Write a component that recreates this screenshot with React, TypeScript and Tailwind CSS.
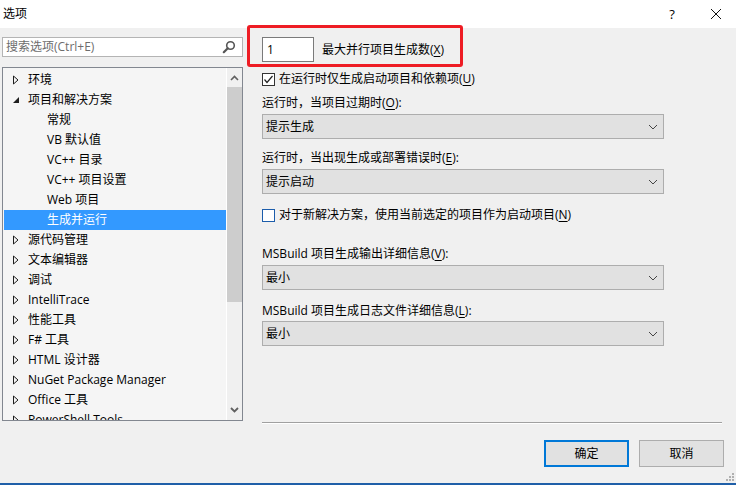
import React from "react"

const font = { fontFamily: '"Open Sans", "Noto Sans CJK SC", sans-serif' }

type TreeItem = { label: string; level: 0 | 1; state?: "open" | "closed"; selected?: boolean }

const treeItems: TreeItem[] = [
  { label: "环境", level: 0, state: "closed" },
  { label: "项目和解决方案", level: 0, state: "open" },
  { label: "常规", level: 1 },
  { label: "VB 默认值", level: 1 },
  { label: "VC++ 目录", level: 1 },
  { label: "VC++ 项目设置", level: 1 },
  { label: "Web 项目", level: 1 },
  { label: "生成并运行", level: 1, selected: true },
  { label: "源代码管理", level: 0, state: "closed" },
  { label: "文本编辑器", level: 0, state: "closed" },
  { label: "调试", level: 0, state: "closed" },
  { label: "IntelliTrace", level: 0, state: "closed" },
  { label: "性能工具", level: 0, state: "closed" },
  { label: "F# 工具", level: 0, state: "closed" },
  { label: "HTML 设计器", level: 0, state: "closed" },
  { label: "NuGet Package Manager", level: 0, state: "closed" },
  { label: "Office 工具", level: 0, state: "closed" },
  { label: "PowerShell Tools", level: 0, state: "closed" },
]

function Arrow({ state }: { state: "open" | "closed" }) {
  if (state === "open") {
    return (
      <svg width="8" height="8" viewBox="0 0 8 8" className="block">
        <polygon points="7,1 7,7 1,7" fill="#1e1e1e" />
      </svg>
    )
  }
  return (
    <svg width="8" height="10" viewBox="0 0 8 10" className="block">
      <polygon points="1.5,1 6,5 1.5,9" fill="none" stroke="#1e1e1e" strokeWidth="1" />
    </svg>
  )
}

function Chevron() {
  return (
    <svg width="10" height="6" viewBox="0 0 10 6" className="block">
      <polyline points="1,1 5,5 9,1" fill="none" stroke="#444" strokeWidth="1" />
    </svg>
  )
}

function Underlined({ text, k }: { text: string; k: string }) {
  return (
    <>
      {text}(<span className="underline underline-offset-2">{k}</span>)
    </>
  )
}

function Dropdown({ value }: { value: string }) {
  return (
    <div className="w-[402px] h-[25px] bg-[#e1e1e1] border border-[#adadad] flex items-center justify-between pl-[3px] pr-[5px]">
      <span>{value}</span>
      <Chevron />
    </div>
  )
}

function Tree() {
  return (
    <div className="mt-[10px] h-[354px] border border-[#828790] bg-[#f5f5f5] flex overflow-hidden">
      <div className="flex-1 pt-[2px] overflow-hidden">
        {treeItems.map((item) => (
          <div
            key={item.label}
            className={`h-[20px] ml-[1px] flex items-center whitespace-nowrap ${
              item.selected ? "bg-[#3399ff] text-white" : "text-black"
            }`}
          >
            {item.level === 0 ? (
              <>
                <div className="w-[24px] flex justify-end pr-[8px]">{item.state && <Arrow state={item.state} />}</div>
                <span>{item.label}</span>
              </>
            ) : (
              <span className="pl-[43px]">{item.label}</span>
            )}
          </div>
        ))}
      </div>
      {/* scrollbar */}
      <div className="w-[16px] bg-[#f0f0f0] border-l border-white flex flex-col items-center">
        <div className="h-[17px] flex items-center justify-center pt-[2px]">
          <svg width="9" height="6" viewBox="0 0 9 6">
            <polyline points="1,5 4.5,1.5 8,5" fill="none" stroke="#606060" strokeWidth="1.6" />
          </svg>
        </div>
        <div className="w-[15px] h-[215px] bg-[#cdcdcd] mt-[2px]" />
        <div className="flex-1" />
        <div className="h-[17px] flex items-center justify-center mb-[2px]">
          <svg width="9" height="6" viewBox="0 0 9 6">
            <polyline points="1,1 4.5,4.5 8,1" fill="none" stroke="#606060" strokeWidth="1.8" />
          </svg>
        </div>
      </div>
    </div>
  )
}

export default function App() {
  return (
    <div
      className="relative w-[736px] h-[485px] bg-[#f0f0f0] flex flex-col overflow-hidden text-[12px] leading-[16px] text-black"
      style={font}
    >
      {/* Title bar */}
      <div className="h-[28px] bg-white flex items-center pl-[3px] shrink-0">
        <span className="text-[12px]">选项</span>
        <div className="flex-1" />
        <span className="text-[13px] w-[20px] text-center mr-[28px]">?</span>
        <svg width="12" height="12" viewBox="0 0 12 12" className="mr-[14px]">
          <path d="M1 1 L11 11 M11 1 L1 11" stroke="#111" strokeWidth="1" />
        </svg>
      </div>

      <div className="flex flex-1 min-h-0">
        {/* Left column */}
        <div className="w-[241px] ml-[2px] flex flex-col">
          <div className="mt-[9px] h-[20px] bg-white border border-[#b4b4b4] flex items-center pl-[3px] pr-[6px]">
            <span className="flex-1 text-[#6d6d6d]">搜索选项(Ctrl+E)</span>
            <svg width="14" height="14" viewBox="0 0 14 14">
              <circle cx="8.5" cy="5.5" r="3.8" fill="none" stroke="#555" strokeWidth="1.6" />
              <path d="M5.8 8.2 L1.8 12.2" stroke="#555" strokeWidth="2.2" strokeLinecap="round" />
            </svg>
          </div>
          <Tree />
        </div>

        {/* Right column */}
        <div className="ml-[19px] w-[462px] flex flex-col">
          <div className="mt-[9px] flex items-center h-[25px]">
            <div className="w-[52px] h-[25px] bg-white border border-[#7a7a7a] flex items-center pl-[4px]">1</div>
            <span className="ml-[8px]">
              <Underlined text="最大并行项目生成数" k="X" />
            </span>
          </div>

          <div className="mt-[9px] flex items-center h-[16px]">
            <div className="w-[13px] h-[13px] border border-[#333] bg-white flex items-center justify-center">
              <svg width="11" height="11" viewBox="0 0 11 11">
                <polyline points="1.5,5.5 4,8.5 9.5,2" fill="none" stroke="#222" strokeWidth="1.2" />
              </svg>
            </div>
            <span className="ml-[4px]">
              <Underlined text="在运行时仅生成启动项目和依赖项" k="U" />
            </span>
          </div>

          <div className="mt-[8px] h-[16px]">
            <Underlined text="运行时，当项目过期时" k="O" />:
          </div>
          <div className="mt-[3px]">
            <Dropdown value="提示生成" />
          </div>

          <div className="mt-[11px] h-[16px]">
            <Underlined text="运行时，当出现生成或部署错误时" k="E" />:
          </div>
          <div className="mt-[3px]">
            <Dropdown value="提示启动" />
          </div>

          <div className="mt-[13px] flex items-center h-[16px]">
            <div className="w-[13px] h-[13px] border border-[#1c5dab] bg-white" />
            <span className="ml-[4px]">
              <Underlined text="对于新解决方案，使用当前选定的项目作为启动项目" k="N" />
            </span>
          </div>

          <div className="mt-[23px] h-[16px]">
            MSBuild <Underlined text="项目生成输出详细信息" k="V" />:
          </div>
          <div className="mt-[3px]">
            <Dropdown value="最小" />
          </div>

          <div className="mt-[13px] h-[16px]">
            MSBuild <Underlined text="项目生成日志文件详细信息" k="L" />:
          </div>
          <div className="mt-[2px]">
            <Dropdown value="最小" />
          </div>

          <div className="mt-[76px] w-[460px] h-[2px] border-t border-[#a0a0a0] border-b border-b-white" />

          <div className="mt-[16px] flex justify-end gap-[10px]">
            <button className="w-[85px] h-[27px] bg-[#e1e1e1] border-2 border-[#0078d7]">确定</button>
            <button className="w-[85px] h-[27px] bg-[#e1e1e1] border border-[#adadad]">取消</button>
          </div>
        </div>
      </div>

      {/* resize grip */}
      <div className="absolute right-[2px] bottom-[4px] grid grid-cols-3 gap-[1px]">
        {[0, 0, 1, 0, 1, 1, 1, 1, 1].map((v, i) => (
          <div key={i} className={`w-[2px] h-[2px] ${v ? "bg-[#b0b0b0]" : ""}`} />
        ))}
      </div>

      <div className="h-[2px] bg-[#1f5fa8] shrink-0" />

      {/* annotation */}
      <div className="absolute left-[247px] top-[25px] w-[216px] h-[42px] border-[3px] border-[#ee1c24] rounded-[3px]" />
    </div>
  )
}
